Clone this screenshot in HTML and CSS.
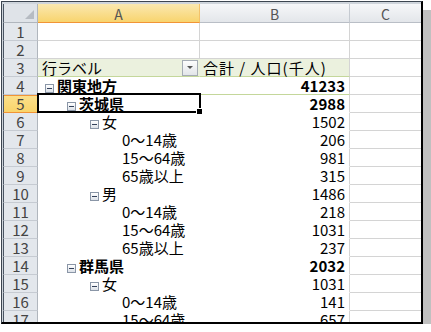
FILE: index.html
```html
<!DOCTYPE html>
<html>
<head>
<meta charset="utf-8">
<title>ピボットテーブル</title>
<link rel="stylesheet" href="styles.css">
</head>
<body>

<div class="window">
  <div class="sheet">
    <!-- column headers -->
    <div class="corner"><span class="corner-tri"></span></div>
    <div class="ch ch-sel">A</div>
    <div class="ch">B</div>
    <div class="ch ch-last">C</div>

    <div class="rh">1</div><div class="c"></div><div class="c"></div><div class="c c-last"></div>
    <div class="rh">2</div><div class="c"></div><div class="c"></div><div class="c c-last"></div>

    <!-- pivot header -->
    <div class="rh">3</div>
    <div class="c pa ph"><span>行ラベル</span><span class="dd"></span></div>
    <div class="c pb ph ph-b">合計 / 人口(千人)</div>
    <div class="c c-last"></div>

    <div class="rh">4</div>
    <div class="c pa sub lv0 line"><span class="tg"></span>関東地方</div>
    <div class="c pb sub line">41233</div>
    <div class="c c-last"></div>

    <div class="rh rh-sel">5</div>
    <div class="c pa sub lv1 cur"><span class="tg"></span>茨城県</div>
    <div class="c pb sub">2988</div>
    <div class="c c-last"></div>

    <div class="rh">6</div>
    <div class="c pa lv2"><span class="tg"></span>女</div>
    <div class="c pb">1502</div>
    <div class="c c-last"></div>

    <div class="rh">7</div>
    <div class="c pa lv3">0～14歳</div>
    <div class="c pb">206</div>
    <div class="c c-last"></div>

    <div class="rh">8</div>
    <div class="c pa lv3">15～64歳</div>
    <div class="c pb">981</div>
    <div class="c c-last"></div>

    <div class="rh">9</div>
    <div class="c pa lv3">65歳以上</div>
    <div class="c pb">315</div>
    <div class="c c-last"></div>

    <div class="rh">10</div>
    <div class="c pa lv2"><span class="tg"></span>男</div>
    <div class="c pb">1486</div>
    <div class="c c-last"></div>

    <div class="rh">11</div>
    <div class="c pa lv3">0～14歳</div>
    <div class="c pb">218</div>
    <div class="c c-last"></div>

    <div class="rh">12</div>
    <div class="c pa lv3">15～64歳</div>
    <div class="c pb">1031</div>
    <div class="c c-last"></div>

    <div class="rh">13</div>
    <div class="c pa lv3">65歳以上</div>
    <div class="c pb">237</div>
    <div class="c c-last"></div>

    <div class="rh">14</div>
    <div class="c pa sub lv1"><span class="tg"></span>群馬県</div>
    <div class="c pb sub">2032</div>
    <div class="c c-last"></div>

    <div class="rh">15</div>
    <div class="c pa lv2"><span class="tg"></span>女</div>
    <div class="c pb">1031</div>
    <div class="c c-last"></div>

    <div class="rh">16</div>
    <div class="c pa lv3">0～14歳</div>
    <div class="c pb">141</div>
    <div class="c c-last"></div>

    <div class="rh">17</div>
    <div class="c pa lv3">15～64歳</div>
    <div class="c pb">657</div>
    <div class="c c-last"></div>
  </div>
</div>

</body>
</html>
```
FILE: styles.css
```css
body {
  margin: 0;
  background: #fff;
  font-family: "Noto Sans CJK JP", "DejaVu Sans", sans-serif;
}

/* window frame with drop shadow */
.window {
  margin: 1px 0 0 1px;
  width: 418px;
  height: 318px;
  padding: 2px 0 0 1px;
  border: 1px solid #3c4550;
  border-right: 2px solid #000;
  border-bottom: 2px solid #000;
  background: #cfd5dc;
  box-shadow: 9px 9px 0 #c0c0c0;
  overflow: hidden;
}

.sheet {
  display: grid;
  grid-template-columns: 35px 162px 150px 71px;
  grid-template-rows: 19px repeat(17, 18px);
  background: #fff;
}

.sheet > div {
  box-sizing: border-box;
  white-space: nowrap;
}

/* headers */
.corner {
  display: flex;
  justify-content: flex-end;
  align-items: flex-end;
  padding: 0 3px 3px 0;
  background: #dfe3e8;
  border-left: 1px solid #4a5563;
  border-right: 1px solid #b0b6bd;
  border-bottom: 1px solid #b0b6bd;
}

.corner-tri {
  width: 0;
  height: 0;
  border-left: 9px solid transparent;
  border-bottom: 9px solid #b6bbc2;
}

.ch {
  display: flex;
  justify-content: center;
  align-items: center;
  padding-top: 2px;
  font-size: 14px;
  color: #555;
  background: linear-gradient(#f6f7f9, #e3e6ea);
  border-right: 1px solid #c5cad1;
  border-bottom: 1px solid #b9bec6;
}

.ch-sel {
  background: linear-gradient(#fae8b0, #f8d46e);
  border-right-color: #f3c26a;
  border-bottom-color: #f29436;
}

.ch-last {
  border-right: none;
}

.rh {
  display: flex;
  justify-content: center;
  align-items: flex-end;
  font-size: 15px;
  line-height: 16px;
  color: #444;
  background: #e3e7ec;
  border-left: 1px solid #4a5563;
  border-right: 1px solid #b0b6bd;
  border-bottom: 1px solid #c6cbd2;
}

.rh-sel {
  background: linear-gradient(#fbe08c, #f9d46a);
  border-right-color: #f29436;
  border-bottom-color: #f29436;
  box-shadow: inset 0 1px 0 #f29436;
}

/* cells */
.c {
  display: flex;
  align-items: flex-end;
  font-size: 15px;
  line-height: 16px;
  color: #000;
  border-right: 1px solid #d4d4d4;
  border-bottom: 1px solid #d4d4d4;
}

.c-last {
  border-right: none;
}

/* pivot table area */
.pa {
  border-right-color: #fff;
  border-bottom-color: #fff;
}

.pb {
  justify-content: flex-end;
  padding-right: 4px;
  border-bottom-color: #fff;
}

.ph {
  background: #ebf1de;
  border-bottom-color: #c4d79b;
}

.pa.ph {
  justify-content: space-between;
  padding-left: 4px;
  border-right-color: #ebf1de;
}

.ph-b {
  justify-content: flex-start;
  padding-left: 3px;
  letter-spacing: 1px;
}

.line {
  border-bottom-color: #c4d79b;
}

.sub {
  font-weight: bold;
}

.lv0 { padding-left: 7px; }
.lv1 { padding-left: 29px; }
.lv2 { padding-left: 52px; }
.lv3 { padding-left: 84px; }

/* collapse toggle */
.tg {
  flex: none;
  display: flex;
  align-items: center;
  justify-content: center;
  width: 9px;
  height: 9px;
  box-sizing: border-box;
  margin: 0 3px 1px 0;
  border: 1px solid #8a96a7;
  background: linear-gradient(#fff, #dce1e8);
}

.tg::after {
  content: "";
  width: 5px;
  height: 1px;
  background: #33415a;
}

/* filter dropdown */
.dd {
  align-self: center;
  display: flex;
  align-items: center;
  justify-content: center;
  width: 16px;
  height: 16px;
  box-sizing: border-box;
  margin-right: 1px;
  border: 1px solid #a5acb5;
  background: linear-gradient(#fdfdfd, #e2e5e9);
}

.dd::after {
  content: "";
  border-left: 3px solid transparent;
  border-right: 3px solid transparent;
  border-top: 3px solid #555;
}

/* active cell */
.cur {
  position: relative;
}

.cur::before {
  content: "";
  position: absolute;
  left: -1px;
  top: -2px;
  right: -2px;
  bottom: -1px;
  border: 2px solid #000;
}

.cur::after {
  content: "";
  position: absolute;
  right: -4px;
  bottom: -3px;
  width: 5px;
  height: 5px;
  background: #000;
  border: 1px solid #fff;
}
```
